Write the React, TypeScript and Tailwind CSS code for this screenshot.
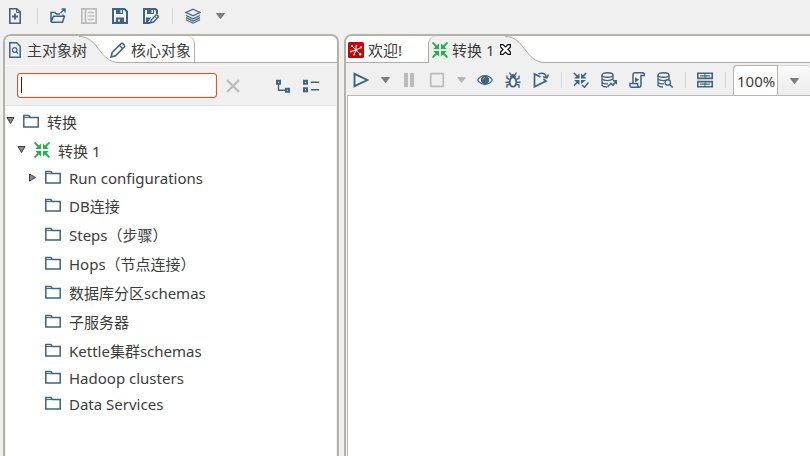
import type { ReactNode } from "react";

const BLUE = "#3d6480";
const GRAY = "#bcbcbc";

function Icon({ children, color = BLUE }: { children: ReactNode; color?: string }) {
  return (
    <svg
      width="16"
      height="16"
      viewBox="0 0 16 16"
      fill="none"
      stroke={color}
      strokeWidth="1.6"
      className="block shrink-0"
      aria-hidden="true"
    >
      {children}
    </svg>
  );
}

const NewFile = () => (
  <Icon>
    <path d="M2.8.8h7l3.4 3.4v11H2.8z" />
    <path d="M9.500 1v3.500h3.500" strokeWidth="1" />
    <path d="M8 5.500v6M5 8.500h6" strokeWidth="1.800" />
  </Icon>
);
const OpenFolder = () => (
  <Icon>
    <path d="M1 14V4.500h4l1.500 1.500H10M1 14.200h11.500l2-6H3.500L1 14M13 8V6.500" strokeWidth="1.500" />
    <path d="M10.500 5l4-3.800M11.500 1H15v3.500" strokeWidth="1.400" />
  </Icon>
);
const ListPane = () => (
  <Icon color={GRAY}>
    <path d="M.8.8h14.400v14.400H.8zM4.500 1v14" strokeWidth="1.800" />
    <path d="M7 4.500h6M7 8h6M7 11.500h6" strokeWidth="1.400" />
  </Icon>
);
const Save = () => (
  <Icon>
    <path d="M1 1h11.500L15 3.500V15H1z" strokeWidth="2" />
    <path d="M4 1h7v5H4z" fill={BLUE} stroke="none" />
    <path d="M8.500 2h1.500v3H8.500z" fill="#f0f0f0" stroke="none" />
    <path d="M4 9.500h8V15H4z" fill={BLUE} stroke="none" />
    <path d="M6 11.500h2v2H6z" fill="#f0f0f0" stroke="none" />
  </Icon>
);
const SaveAs = () => (
  <Icon>
    <path d="M7 15H1V1h11.500L14 2.500V6" strokeWidth="2" />
    <path d="M4 1h7v5H4z" fill={BLUE} stroke="none" />
    <path d="M8.500 2h1.500v3H8.500z" fill="#f0f0f0" stroke="none" />
    <path d="M3 9.500h5L4.500 15H3z" fill={BLUE} stroke="none" />
    <path d="M7.500 14.800l.8-3 4.500-4.500c1.200-.8 3 .8 2.200 2l-4.500 4.700z" fill="#f0f0f0" strokeWidth="1.400" />
    <path d="M11.800 8.500l2.200 2" strokeWidth="1" />
  </Icon>
);
const Layers = () => (
  <Icon>
    <path d="M8 1.200l7 3.300-7 3.300-7-3.300zM1 7.500l7 3.400 7-3.400M1 9.600L8 13l7-3.400M1 11.800l7 3.400 7-3.400" strokeWidth="1.200" />
  </Icon>
);
const Caret = ({ light = false }: { light?: boolean }) => (
  <svg width="9" height="6" viewBox="0 0 9 6" className="block" aria-hidden="true">
    <path d="M.5.500h8L4.500 5.500z" fill={light ? "#b4b4b4" : "#7d7d7d"} stroke={light ? "#b4b4b4" : "#6a6a6a"} strokeWidth=".8" />
  </svg>
);
const FileSearch = () => (
  <Icon>
    <path d="M2.800.8h7l3.400 3.400v11H2.800z" strokeWidth="1.500" />
    <circle cx="7.700" cy="8" r="2.300" strokeWidth="1.200" />
    <path d="M9.300 9.700l1.700 1.800" strokeWidth="1.300" />
  </Icon>
);
const Pencil = () => (
  <Icon>
    <path d="M1 15l1.200-4.500L11 1.800c1.500-1.400 4.500 1.400 3.200 3.200L5.500 13.800z" strokeWidth="1.500" />
    <path d="M9.500 3.500l3 3" strokeWidth="1.200" />
  </Icon>
);
const Folder = () => (
  <Icon>
    <path d="M.8 14V2.500h5l1.400 2h8V14z" strokeWidth="1.500" />
    <path d="M1 4.600h6" strokeWidth="1" />
  </Icon>
);
const Transform = () => (
  <Icon color="#22b14c">
    <path d="M.5.500L5 5M15.500.500L11 5M.5 15.500L5 11M15.500 15.500L11 11" strokeWidth="1.900" />
    <path d="M7 1.500V7H1.200zM9 1.500V7h5.800zM7 14.500V9H1.200zM9 14.500V9h5.800z" fill="#22b14c" stroke="none" />
  </Icon>
);
const Welcome = () => (
  <Icon color="#fff">
    <rect width="16" height="16" rx="1.500" fill="#cc0000" stroke="none" />
    <path d="M8 8L4 4M8 8l5-2.500M8 8l-5 1.500M8 8l-2 4.500M8 8l4 4M8 8V4" strokeWidth="1" />
    <g fill="#fff" stroke="none">
      <circle cx="4" cy="4" r="1" />
      <circle cx="8.500" cy="3.500" r=".8" />
      <circle cx="13" cy="5.300" r="1.100" />
      <circle cx="3" cy="9.500" r=".9" />
      <circle cx="6" cy="12.600" r=".9" />
      <circle cx="12.200" cy="12.200" r="1.200" />
      <circle cx="8" cy="8" r="1.300" />
    </g>
  </Icon>
);
const Play = () => (
  <Icon>
    <path d="M1.500 1.800v12.400L14.300 8z" strokeWidth="1.900" />
  </Icon>
);
const Pause = () => (
  <Icon color={GRAY}>
    <path d="M5 1v14M11 1v14" strokeWidth="4" />
  </Icon>
);
const Stop = () => (
  <Icon color={GRAY}>
    <path d="M1.700 1.700h12.600v12.600H1.700z" strokeWidth="1.700" />
  </Icon>
);
const Eye = () => (
  <Icon>
    <path d="M.7 8C4 2.200 12 2.200 15.300 8 12 13.800 4 13.800.7 8z" strokeWidth="1.200" />
    <circle cx="8" cy="8" r="4.200" fill={BLUE} stroke="none" />
    <path d="M6 7.500a2 2 0 0 1 2-2" stroke="#9fb4c3" strokeWidth=".9" />
  </Icon>
);
const Bug = () => (
  <Icon>
    <path d="M8 5.500c4.600 0 4 9.200 0 9.200s-4.600-9.200 0-9.200z" fill="#f7f7f7" strokeWidth="1.700" />
    <path d="M4.800 5.800c.2-5 6.200-5 6.400 0z" fill={BLUE} stroke="none" />
    <path d="M4.800 7.500L2 6.300V3.500M11.200 7.500L14 6.300V3.500M4.500 10.300H.5M11.500 10.300h4M4.800 12L2 13v2.800M11.200 12l2.800 1v2.800M6 3L4.500.5M10 3L11.500.5" strokeWidth="1.400" />
  </Icon>
);
const Replay = () => (
  <Icon>
    <path d="M7.500 5L1.500 2v12.800L13 9l-2.500-2" strokeWidth="1.700" />
    <path d="M5.500 1.700c4-1.200 7 0 8 3.300M15.500 2.500l-1.700 3.300-3.800-1" strokeWidth="1.500" />
  </Icon>
);
const Verify = () => (
  <Icon>
    <path d="M1 1l4 4M13 1L9.500 5M1 13.500l4-4" strokeWidth="1.600" />
    <path d="M6.500 1.500v5H1zM8 1.500v5h5.500zM6.500 13V8H1zM8 12V8h5z" fill={BLUE} stroke="none" />
    <path d="M9 13l2.500 2.300L15.500 10.500" strokeWidth="1.500" />
  </Icon>
);
const Database = ({ children }: { children: ReactNode }) => (
  <Icon>
    <ellipse cx="6.500" cy="3" rx="5.500" ry="2.200" strokeWidth="1.400" />
    <path d="M1 3v10.500c1 1 3 1.500 5 1.500M12 3v5M1 7c2 2 8 2.300 11 0M1 10.500c1.500 1.200 4 1.600 6 1.200" strokeWidth="1.300" />
    {children}
  </Icon>
);
const DbImpact = () => (
  <Database>
    <path d="M6.500 15l3.500-3.700 2 2 3-4M12 8.800h3.500v3.500" strokeWidth="1.600" />
  </Database>
);
const DbSearch = () => (
  <Database>
    <circle cx="10.800" cy="10.500" r="2.700" fill="#f0f0f0" strokeWidth="1.300" />
    <path d="M12.700 12.500l3 3" strokeWidth="1.500" />
  </Database>
);
const Script = () => (
  <Icon>
    <path d="M4 11V3c0-1.500.5-2.200 2-2.200h7.500c1.500 0 2 1 1.800 2.700H12V13c0 1.500-1 2.200-2 2.200H2.500C1 15.200.6 13 1 11.500h7.500c0 2 .5 3.500 1.500 3.500" strokeWidth="1.500" />
    <path d="M6 5.200v5L10.200 7.700z" fill={BLUE} stroke="none" />
  </Icon>
);
const Results = () => (
  <Icon>
    <path d="M.8 1.200h14.400v5.200H.8zM.8 9.600h14.400v5.200H.8z" />
    <path d="M3 3.800h10M3 12.200h10" strokeWidth="1.200" />
    <path d="M8 1v5M8 10v5" strokeWidth="1" />
  </Icon>
);
const Clear = () => (
  <Icon color="#bdbdbd">
    <path d="M2 2l12 12M14 2L2 14" strokeWidth="2.400" />
  </Icon>
);
const ExpandTree = () => (
  <Icon>
    <path d="M2 2.800h3v3H2zM11 10.800h3v3h-3z" strokeWidth="2" />
    <path d="M3.500 6v6.300H10" strokeWidth="1.400" />
  </Icon>
);
const CollapseTree = () => (
  <Icon>
    <path d="M1 2.800h3v3H1zM1 10.300h3v3H1z" strokeWidth="2" />
    <path d="M8 4.300h8M8 11.800h8" strokeWidth="1.500" />
  </Icon>
);

function Tool({ label, small = false, children }: { label: string; small?: boolean; children: ReactNode }) {
  return (
    <button
      type="button"
      aria-label={label}
      className={`flex h-7 shrink-0 items-center justify-center ${small ? "w-5" : "w-7"}`}
    >
      {children}
    </button>
  );
}

function Separator() {
  return (
    <div className="flex w-3 shrink-0 justify-center">
      <span className="h-4 w-px bg-[#d4d4d4]" />
    </div>
  );
}

function TabTail() {
  return (
    <svg width="40" height="27" viewBox="0 0 40 27" className="absolute top-0 left-full" aria-hidden="true">
      <path d="M0 0C20 0 20 26.500 40 26.500V27H0z" fill="#f0f0f0" />
      <path d="M0 .5C20 .5 20 26.500 40 26.500" fill="none" stroke="#aeaca6" />
    </svg>
  );
}

type Node = { label: string; depth: number; cjk?: boolean; state?: "open" | "closed"; transform?: boolean };

const nodes: Node[] = [
  { label: "转换", depth: 0, cjk: true, state: "open" },
  { label: "转换 1", depth: 1, cjk: true, state: "open", transform: true },
  { label: "Run configurations", depth: 2, state: "closed" },
  { label: "DB连接", depth: 2, cjk: true },
  { label: "Steps（步骤）", depth: 2, cjk: true },
  { label: "Hops（节点连接）", depth: 2, cjk: true },
  { label: "数据库分区schemas", depth: 2, cjk: true },
  { label: "子服务器", depth: 2, cjk: true },
  { label: "Kettle集群schemas", depth: 2, cjk: true },
  { label: "Hadoop clusters", depth: 2 },
  { label: "Data Services", depth: 2 },
];

const indents = ["pl-0", "pl-[11px]", "pl-[22px]"];

function TreeRow({ node }: { node: Node }) {
  return (
    <li
      role="treeitem"
      aria-level={node.depth + 1}
      className={`flex items-center gap-2 ${indents[node.depth]} ${node.cjk ? "h-[29px]" : "h-[26px]"}`}
    >
      <span className="flex w-[9px] shrink-0 justify-center pb-0.5">
        {node.state && (
          <svg width="9" height="9" viewBox="0 0 9 9" aria-hidden="true">
            <path
              d={node.state === "open" ? "M1 1.500h7L4.500 7.500z" : "M1.500 1v7L7.500 4.500z"}
              fill="#8a8a8a"
              stroke="#3c3c3c"
            />
          </svg>
        )}
      </span>
      <span className="pb-0.5">{node.transform ? <Transform /> : <Folder />}</span>
      <span className="whitespace-nowrap">{node.label}</span>
    </li>
  );
}

export default function App() {
  return (
    <div className="flex h-screen flex-col overflow-hidden bg-[#f0f0f0] font-['Noto_Sans','Noto_Sans_CJK_SC',sans-serif] text-[15px] leading-5 text-[#3c3c3c]">
      <header className="flex h-[34px] shrink-0 items-center pb-0.5">
        <div className="flex items-center gap-[3px] pl-px">
          <Tool label="新建"><NewFile /></Tool>
        </div>
        <div className="ml-0.5">
          <Separator />
        </div>
        <div className="flex items-center gap-[3px] px-px">
          <Tool label="打开"><OpenFolder /></Tool>
          <Tool label="探索资源库"><ListPane /></Tool>
          <Tool label="保存"><Save /></Tool>
          <Tool label="另存为"><SaveAs /></Tool>
        </div>
        <Separator />
        <div className="flex items-center gap-[3px] px-px">
          <Tool label="透视图"><Layers /></Tool>
          <Tool label="透视图菜单" small><Caret /></Tool>
        </div>
      </header>

      <div className="flex min-h-0 flex-1 gap-[5px] pl-[3px]">
        <aside className="flex w-[336px] shrink-0 flex-col rounded-t-lg border-x-2 border-t-2 border-[#b5b2ac]">
          <div role="tablist" className="flex h-[27px] shrink-0 rounded-t-md border-b border-[#aeaca6] bg-white">
            <div className="relative flex h-[27px] w-[74px] items-center rounded-tl-md bg-[#f0f0f0]">
              <TabTail />
              <button type="button" role="tab" aria-selected="true" className="relative flex items-center gap-1 pl-0.5 whitespace-nowrap">
                <FileSearch />
                主对象树
              </button>
            </div>
            <button
              type="button"
              role="tab"
              aria-selected="false"
              className="relative ml-[31px] flex items-center gap-[5px] rounded-tr-lg border-r border-[#aeaca6] pt-px pr-[3px] whitespace-nowrap"
            >
              <Pencil />
              核心对象
            </button>
          </div>
          <div className="mx-px mt-0.5 flex h-[41px] shrink-0 items-center border-t border-b border-t-white border-b-[#dedede] pl-[11px]">
            <div className="relative">
              <input
                type="text"
                aria-label="搜索"
                className="block h-[25px] w-[200px] rounded-[3px] border border-[#d5562b] bg-white px-1 shadow-[inset_0_0_1px_#d5562b] outline-none"
              />
              <span className="absolute top-1 left-1 h-4 w-px bg-[#202020]" />
            </div>
            <button type="button" aria-label="清除" className="ml-2"><Clear /></button>
            <button type="button" aria-label="展开全部" className="ml-[34px]"><ExpandTree /></button>
            <button type="button" aria-label="折叠全部" className="ml-3"><CollapseTree /></button>
          </div>
          <ul role="tree" className="mx-px min-h-0 flex-1 overflow-hidden bg-white pt-px">
            {nodes.map((node) => (
              <TreeRow key={node.label} node={node} />
            ))}
          </ul>
        </aside>

        <main className="flex min-w-0 flex-1 flex-col rounded-tl-lg border-t-2 border-l-2 border-[#b5b2ac]">
          <div role="tablist" className="flex h-[27px] shrink-0 rounded-tl-md border-b border-[#aeaca6] bg-white">
            <button type="button" role="tab" aria-selected="false" className="flex w-[82px] items-center gap-1 pt-px pl-0.5 whitespace-nowrap">
              <Welcome />
              欢迎!
            </button>
            <div className="relative flex h-[27px] w-[77px] items-center rounded-tl-lg border-l border-[#aeaca6] bg-[#f0f0f0]">
              <TabTail />
              <button type="button" role="tab" aria-selected="true" className="relative flex items-center gap-1 pl-[3px] whitespace-nowrap">
                <Transform />
                转换 1
              </button>
              <button type="button" aria-label="关闭" className="relative ml-1.5">
                <svg width="11" height="11" viewBox="0 0 11 11" className="block" aria-hidden="true">
                  <path
                    d="M.6.600h2.400l2.500 2.400L8 .600h2.400V3L8 5.500 10.400 8v2.400H8L5.500 8 3 10.400H.6V8L3 5.500.6 3z"
                    fill="#fff"
                    stroke="#101010"
                    strokeWidth="1.200"
                  />
                </svg>
              </button>
            </div>
          </div>
          <div role="toolbar" className="flex h-8 shrink-0 items-center pt-0.5 pl-px">
            <Tool label="运行"><Play /></Tool>
            <Tool label="运行选项" small><Caret /></Tool>
            <Tool label="暂停"><Pause /></Tool>
            <Tool label="停止"><Stop /></Tool>
            <Tool label="停止选项" small><Caret light /></Tool>
            <Tool label="预览"><Eye /></Tool>
            <Tool label="调试"><Bug /></Tool>
            <Tool label="重放"><Replay /></Tool>
            <Separator />
            <Tool label="校验"><Verify /></Tool>
            <Tool label="影响分析"><DbImpact /></Tool>
            <Tool label="生成SQL"><Script /></Tool>
            <Tool label="浏览数据库"><DbSearch /></Tool>
            <Separator />
            <Tool label="显示执行结果"><Results /></Tool>
            <Separator />
            <div className="ml-0.5 flex h-[30px] min-w-0 flex-1">
              <input
                type="text"
                aria-label="缩放"
                defaultValue="100%"
                className="block w-[45px] rounded-tl-sm border-x border-t border-[#b5b2ac] bg-white pl-[3px] outline-none"
              />
              <button
                type="button"
                aria-label="缩放选项"
                className="flex flex-1 items-center justify-center rounded-tr border-t border-[#d4d4d4] bg-linear-to-b from-[#fafafa] to-[#ececec]"
              >
                <Caret />
              </button>
            </div>
          </div>
          <div className="ml-px min-h-0 flex-1 border-t border-l border-[#b8b8b8] bg-white" />
        </main>
      </div>
    </div>
  );
}
